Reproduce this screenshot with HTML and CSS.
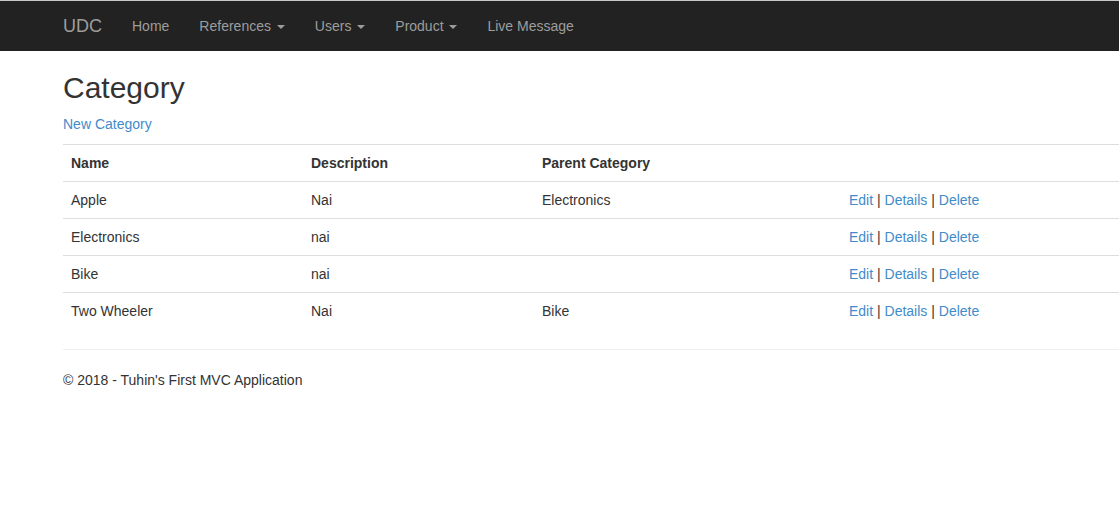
FILE: index.html
```html
<!DOCTYPE html>
<html>
<head>
<meta charset="utf-8">
<title>Category</title>
<link rel="stylesheet" href="styles.css">
</head>
<body>
<div class="navbar">
  <div class="nav-inner">
    <a class="brand" href="#">UDC</a>
    <ul class="nav">
      <li><a href="#">Home</a></li>
      <li><a href="#">References <span class="caret"></span></a></li>
      <li><a href="#">Users <span class="caret"></span></a></li>
      <li><a href="#">Product <span class="caret"></span></a></li>
      <li><a href="#">Live Message</a></li>
    </ul>
  </div>
</div>
<div class="body-content">
  <h2 class="title">Category</h2>
  <p class="create"><a href="#">New Category</a></p>
  <table class="table">
    <colgroup>
      <col class="c1"><col class="c2"><col class="c3"><col class="c4">
    </colgroup>
    <tr>
      <th>Name</th>
      <th>Description</th>
      <th>Parent Category</th>
      <th></th>
    </tr>
    <tr>
      <td>Apple</td><td>Nai</td><td>Electronics</td>
      <td><a href="#">Edit</a> | <a href="#">Details</a> | <a href="#">Delete</a></td>
    </tr>
    <tr>
      <td>Electronics</td><td>nai</td><td></td>
      <td><a href="#">Edit</a> | <a href="#">Details</a> | <a href="#">Delete</a></td>
    </tr>
    <tr>
      <td>Bike</td><td>nai</td><td></td>
      <td><a href="#">Edit</a> | <a href="#">Details</a> | <a href="#">Delete</a></td>
    </tr>
    <tr>
      <td>Two Wheeler</td><td>Nai</td><td>Bike</td>
      <td><a href="#">Edit</a> | <a href="#">Details</a> | <a href="#">Delete</a></td>
    </tr>
  </table>
  <hr class="sep">
  <footer class="footer">
    <p>&copy; 2018 - Tuhin's First MVC Application</p>
  </footer>
</div>
</body>
</html>
```
FILE: styles.css
```css
* { box-sizing: border-box; }
html, body { margin: 0; padding: 0; overflow: hidden; }
body {
  font-family: "Liberation Sans", Arial, sans-serif;
  font-size: 14px;
  line-height: 20px;
  color: #333;
  background: #fff;
  border-top: 1px solid #c8c8c8;
}
a { color: #428bca; text-decoration: none; }

.navbar {
  background: #222;
  height: 50px;
}
.nav-inner {
  display: flex;
  align-items: center;
  height: 50px;
  padding-left: 48px;
}
.brand {
  color: #9d9d9d;
  font-size: 18px;
  line-height: 20px;
  padding: 15px;
}
.nav {
  display: flex;
  list-style: none;
  margin: 0;
  padding: 0;
}
.nav a {
  display: block;
  color: #9d9d9d;
  padding: 15px;
  line-height: 20px;
}
.caret {
  display: inline-block;
  width: 0;
  height: 0;
  margin-left: 2px;
  vertical-align: middle;
  border-top: 4px solid #9d9d9d;
  border-left: 4px solid transparent;
  border-right: 4px solid transparent;
}

.body-content {
  padding-left: 63px;
}
.title {
  font-size: 30px;
  font-weight: 500;
  line-height: 33px;
  margin: 20px 0 10px;
  color: #333;
}
.create { margin: 0 0 10px; }

.table {
  width: 100%;
  border-collapse: collapse;
  border-spacing: 0;
  margin-bottom: 20px;
}
.c1 { width: 240px; }
.c2 { width: 231px; }
.c3 { width: 307px; }
.table th, .table td {
  padding: 8px;
  line-height: 20px;
  text-align: left;
  vertical-align: top;
  border-top: 1px solid #ddd;
}
.table th { font-weight: bold; }

.sep {
  margin: 20px 0;
  border: 0;
  border-top: 1px solid #eee;
}
.footer p { margin: 0 0 10px; }
```
